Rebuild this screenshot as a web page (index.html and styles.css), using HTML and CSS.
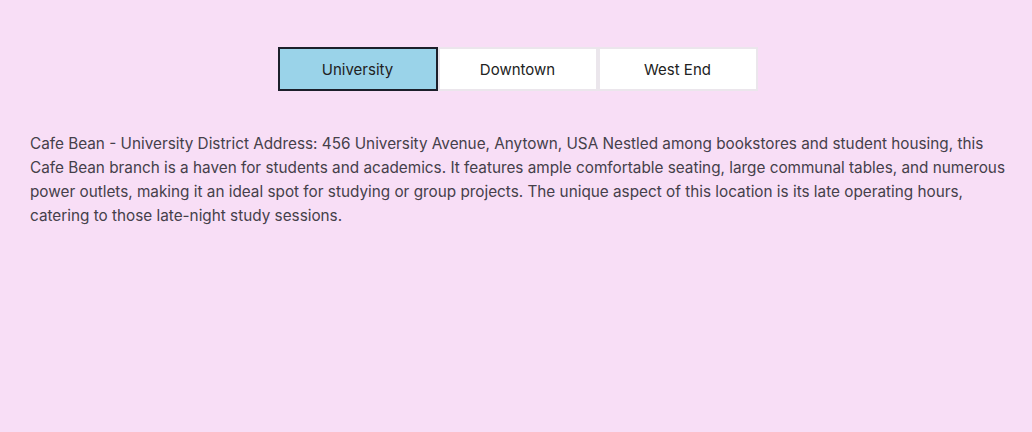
FILE: index.html
```html
<!DOCTYPE html>
<html lang="en">
<head>
  <meta charset="UTF-8">
  <meta name="viewport" content="width=device-width, initial-scale=1.0">
  <title>Cafe Bean Locations</title>
  <link rel="stylesheet" href="styles.css">
</head>
<body>
  <div class="tabs">
    <button class="tab active">University</button>
    <button class="tab">Downtown</button>
    <button class="tab">West End</button>
  </div>

  <div class="tab-content">
    <p>Cafe Bean - University District Address: 456 University Avenue, Anytown, USA Nestled among bookstores and student housing, this Cafe Bean branch is a haven for students and academics. It features ample comfortable seating, large communal tables, and numerous power outlets, making it an ideal spot for studying or group projects. The unique aspect of this location is its late operating hours, catering to those late-night study sessions.</p>
  </div>
</body>
</html>
```

FILE: styles.css
```css
/* General Styling */
body {
  font-family: Inter, 'Noto Sans', sans-serif;
  background: #f8def6;
  margin: 0;
  padding: 0;
  color: #45404a;
}

.tabs {
  display: flex;
  justify-content: center;
  padding-top: 47px;
  padding-left: 3px;
}

.tab {
  width: 160px;
  height: 44px;
  background: #ffffff;
  border: 2px solid #ebe6ec;
  font-family: Inter, 'Noto Sans', sans-serif;
  font-size: 15px;
  color: #222;
  cursor: pointer;
}

.tab.active {
  background: #9ad3e9;
  border-color: #1c1f2a;
}

.tab-content {
  padding: 41px 22px 41px 30px;
}

.tab-content p {
  margin: 0;
  font-size: 15.3px;
  line-height: 24px;
}
```
